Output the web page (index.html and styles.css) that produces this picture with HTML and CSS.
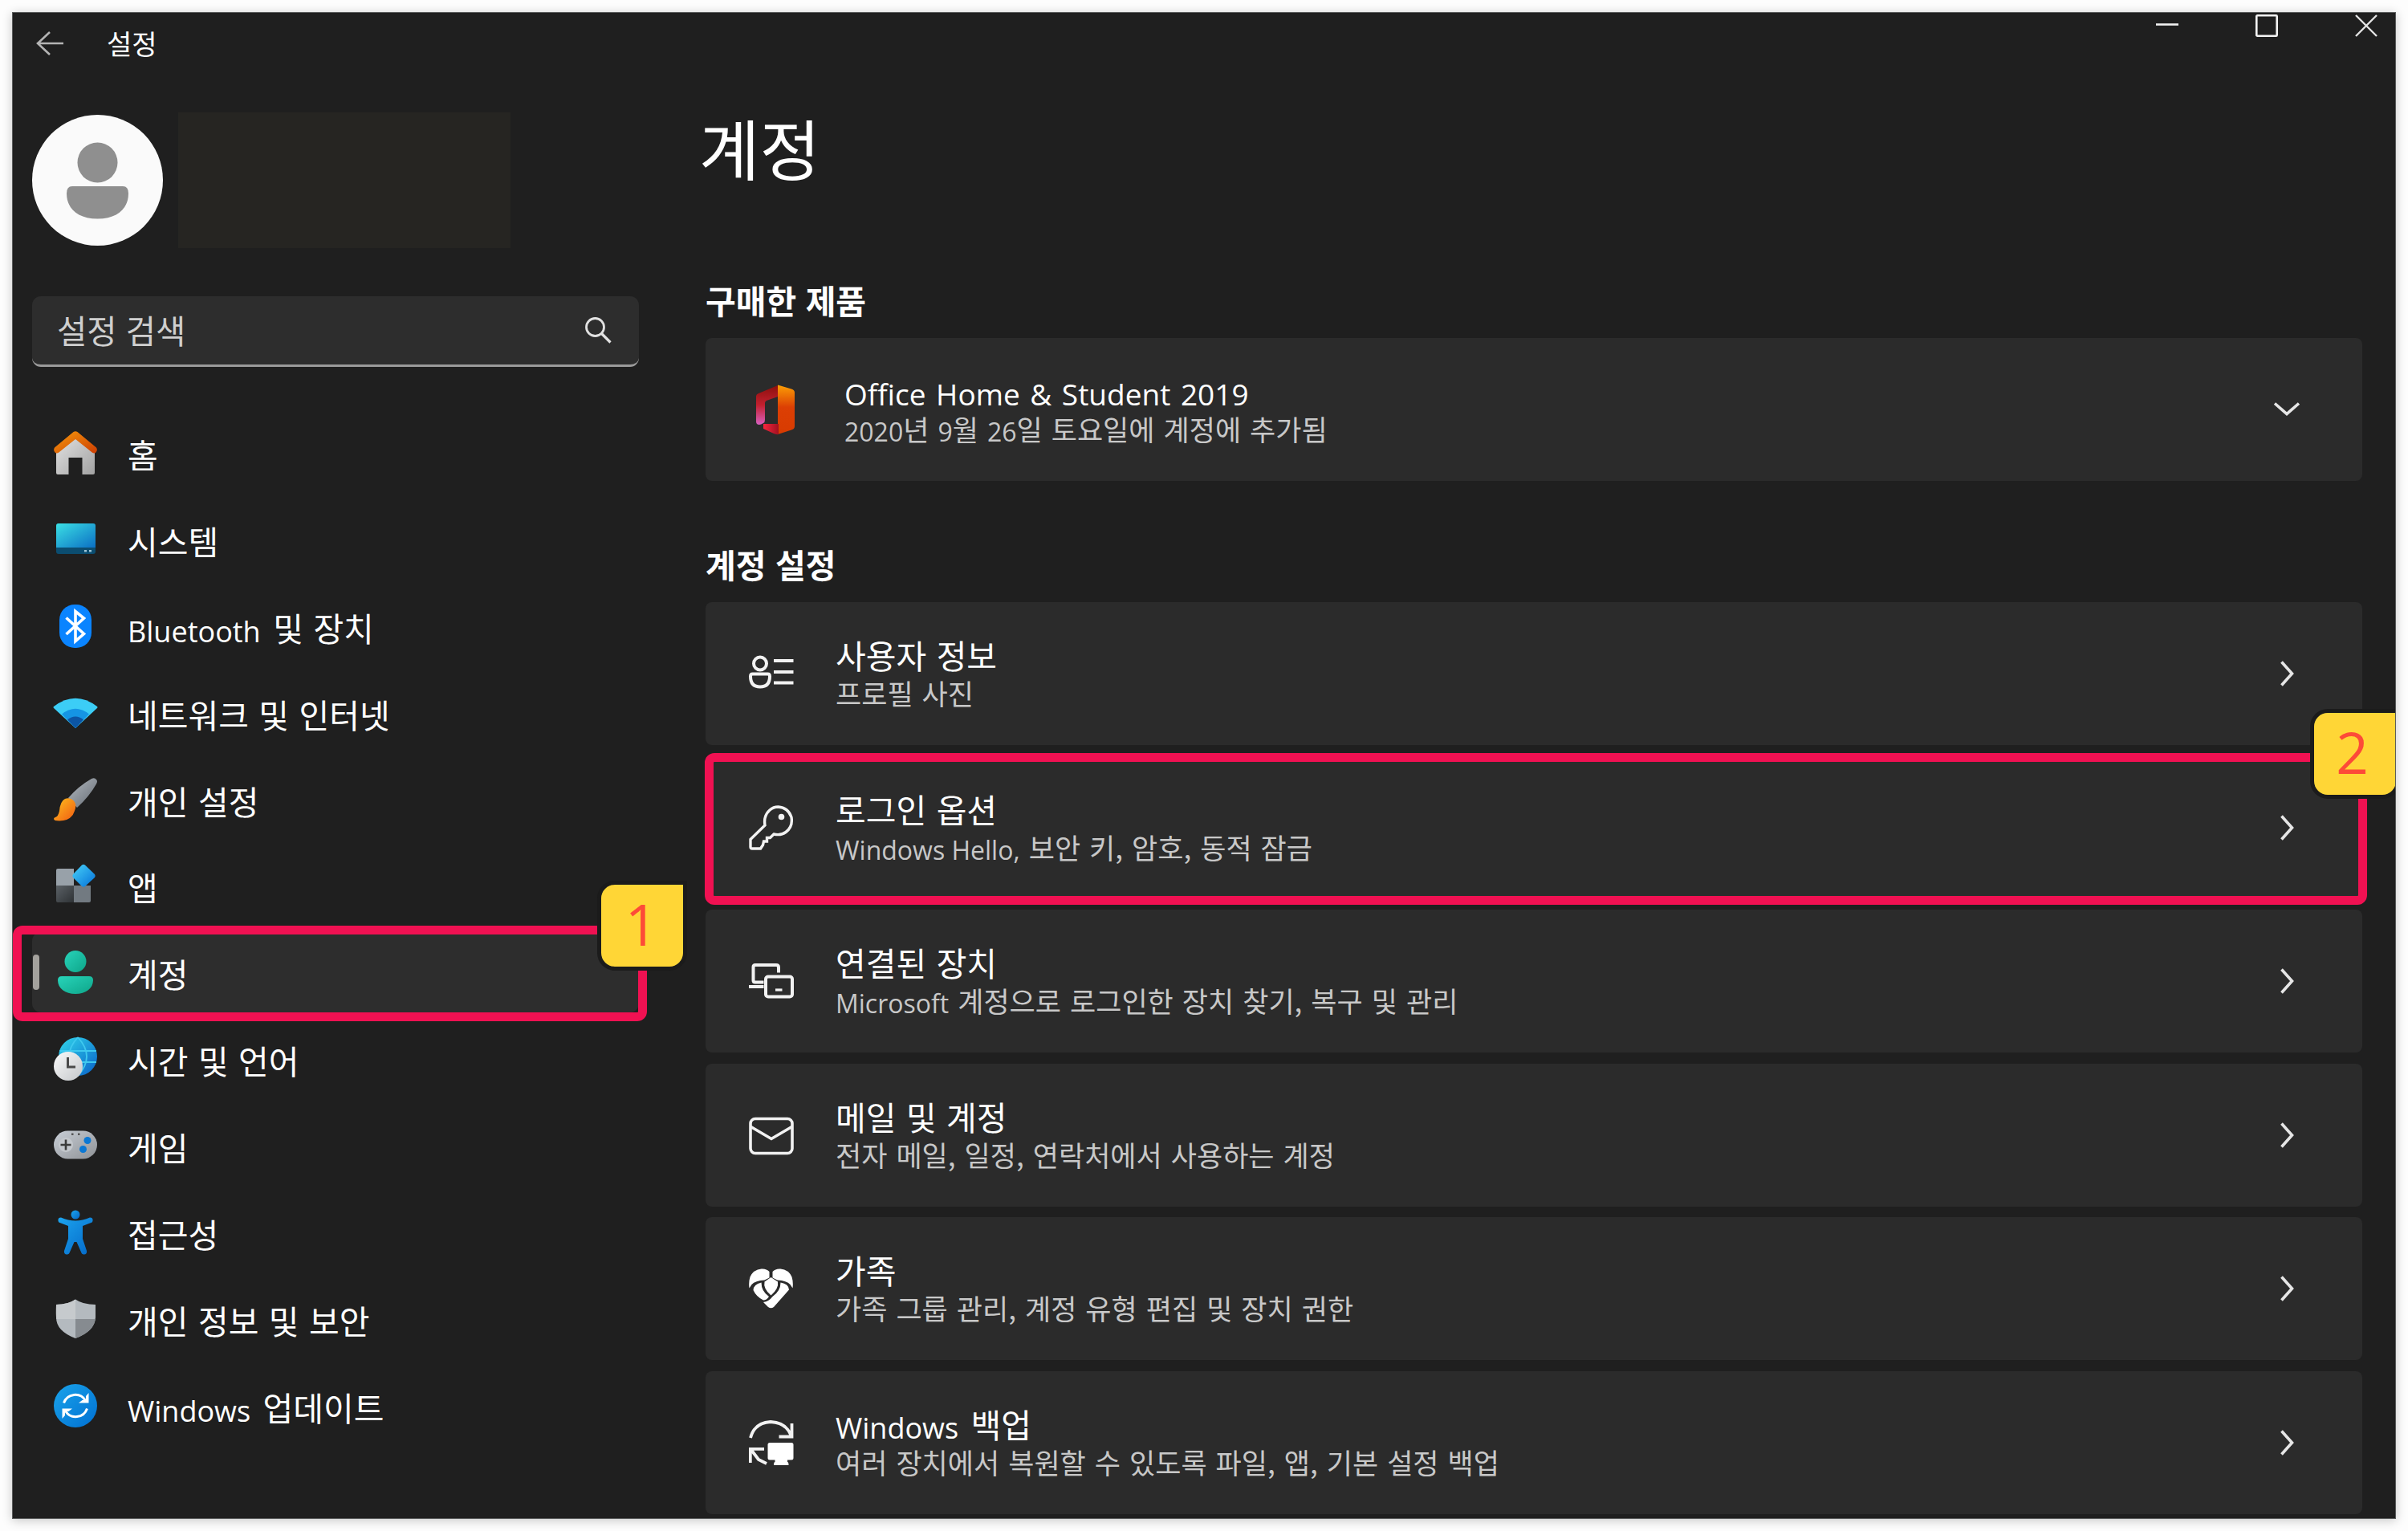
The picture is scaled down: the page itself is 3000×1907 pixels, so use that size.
FILE: index.html
```html
<!DOCTYPE html>
<html lang="ko">
<head>
<meta charset="utf-8">
<title>설정</title>
<link rel="stylesheet" href="styles.css">
</head>
<body>
<div class="window">
  <header class="titlebar">
    <svg class="back" viewBox="0 0 34 32"><path d="M17 2 2 16l15 14M2 16h32" fill="none" stroke="#b4b4b4" stroke-width="2.6"/></svg>
    <span class="app-name">설정</span>
    <div class="controls">
      <svg viewBox="0 0 28 28"><path d="M0 12.5h28" stroke="#f2f2f2" stroke-width="2.6"/></svg>
      <svg viewBox="0 0 28 28"><rect x="1.3" y="1.3" width="25.4" height="25.4" rx="1" fill="none" stroke="#f2f2f2" stroke-width="2.6"/></svg>
      <svg viewBox="0 0 28 28"><path d="m1 1 26 26M27 1 1 27" stroke="#e4e4e4" stroke-width="2.4"/></svg>
    </div>
  </header>

  <div class="body">
    <aside class="sidebar">
      <div class="profile">
        <svg class="avatar" viewBox="0 0 163 163"><circle cx="81.5" cy="81.5" r="81.5" fill="#fafafa"/><circle cx="81.5" cy="59.5" r="25" fill="#8f8f8f"/><path d="M50 89h63q7 0 7 9c0 18-13 31.500-38.500 31.500S43 116 43 98q0-9 7-9z" fill="#8f8f8f"/></svg>
        <div class="name"></div>
      </div>
      <div class="search">
        <span>설정 검색</span>
        <svg viewBox="0 0 34 34"><circle cx="13.500" cy="13.500" r="11" fill="none" stroke="#e2e2e2" stroke-width="2.800"/><path d="m21.500 21.500 11 11" stroke="#e2e2e2" stroke-width="3.200"/></svg>
      </div>
      <nav class="nav">
        <a class="item">
          <svg viewBox="0 0 56 56"><defs><linearGradient id="roof" x2="1" y2="1"><stop stop-color="#f69a0c"/><stop offset="1" stop-color="#cd3d02"/></linearGradient><linearGradient id="wall" x2="1" y2="1"><stop stop-color="#e4e4e4"/><stop offset="1" stop-color="#a2a2a2"/></linearGradient></defs><path d="M4 22 28 5l24 17v31q0 2-2 2H36.500V34h-17v21H6q-2 0-2-2z" fill="url(#wall)"/><path d="M25.500 2q2.500-1.600 5 0L54 21.500q2 3-.5 6-2 2-4.500.3L28 11 7 27.800q-2.500 1.700-4.500-.3-2.500-3-.5-6z" fill="url(#roof)"/></svg>
          <span>홈</span></a>
        <a class="item">
          <svg viewBox="0 0 56 56"><defs><linearGradient id="screen" x2="1" y2="1"><stop stop-color="#3be0e4"/><stop offset="1" stop-color="#0b6fc4"/></linearGradient></defs><rect x="4" y="8" width="49" height="38" rx="3" fill="#0b4d70"/><path d="M7 8h43q3 0 3 3v27H4V11q0-3 3-3z" fill="url(#screen)"/><path d="M39 41h3v2.500h-3zM45 41h3v2.500h-3z" fill="#9cc4d6"/></svg>
          <span>시스템</span></a>
        <a class="item">
          <svg viewBox="0 0 56 56"><rect x="8" y="1" width="40" height="54" rx="19" fill="#0a84ff"/><path d="m16.500 17.500 22 20L28 46.500V9.500l10.500 8.500-22 20" fill="none" stroke="#fff" stroke-width="3.600"/></svg>
          <span><b class="latin">Bluetooth</b> 및 장치</span></a>
        <a class="item">
          <svg viewBox="0 0 56 56"><path d="M1 20Q28-.5 55 20q1 1 0 2L28 47 1 22q-1-1 0-2z" fill="#3ccdf6"/><path d="M11 29.500q17-13.500 34 0L28 47z" fill="#1595e4"/><path d="M18 36.500q10-8 20 0L28 47z" fill="#0c55a4"/></svg>
          <span>네트워크 및 인터넷</span></a>
        <a class="item">
          <svg viewBox="0 0 56 56"><defs><linearGradient id="handle" x2="1" y2="1"><stop stop-color="#b4bac1"/><stop offset="1" stop-color="#646b73"/></linearGradient><linearGradient id="bristle" x2="1" y2="1"><stop stop-color="#ffc21e"/><stop offset="1" stop-color="#f05a12"/></linearGradient></defs><path d="M19 26Q32 11 48 2q4-2 6 1 2 2 0 5.500-9 16-24 29.500z" fill="url(#handle)"/><path d="M15 27q6-2.500 11 2.500 4 5 1 12.500Q23 54.500 8 54.500q-7 0-7-2.500 0-1.500 2-2 3.500-1 5-8 1-12 7-15z" fill="url(#bristle)"/></svg>
          <span>개인 설정</span></a>
        <a class="item">
          <svg viewBox="0 0 56 56"><defs><linearGradient id="tile" x2="1" y2="1"><stop stop-color="#5b6166"/><stop offset="1" stop-color="#2e3235"/></linearGradient><linearGradient id="gem" x2="1" y2="1"><stop stop-color="#48d2f8"/><stop offset="1" stop-color="#0470d8"/></linearGradient></defs><path d="M4 9q0-2 2-2h20v21H4z" fill="#98a1a9"/><path d="M4 28h22v21H6q-2 0-2-2z" fill="url(#tile)"/><path d="M26 28h21v19q0 2-2 2H26z" fill="#727a81"/><path d="M36 2.500q2-1.500 4 0l12 11.500q1.500 2 0 4L40 29q-2 1.500-4 0L25 18q-1.500-2 0-4z" fill="url(#gem)"/></svg>
          <span>앱</span></a>
        <a class="item selected">
          <svg viewBox="0 0 56 56"><defs><linearGradient id="teal" x2="1" y2="1"><stop stop-color="#28d4ba"/><stop offset="1" stop-color="#0ea589"/></linearGradient></defs><circle cx="28" cy="14.500" r="13.500" fill="url(#teal)"/><path d="M11 33h34q5 0 5 5c0 10-9 17-22 17S6 48 6 38q0-5 5-5z" fill="url(#teal)"/></svg>
          <span>계정</span></a>
        <a class="item">
          <svg viewBox="0 0 56 56"><defs><linearGradient id="globe" x2="1" y2="1"><stop stop-color="#32d8ec"/><stop offset="1" stop-color="#0860c8"/></linearGradient><linearGradient id="clock" x2="1" y2="1"><stop stop-color="#fbfbfb"/><stop offset="1" stop-color="#c4c7ca"/></linearGradient></defs><circle cx="31" cy="25" r="24" fill="url(#globe)"/><path d="M8 18h46M8 32h46M31 1q-22 24 0 48M31 1q22 24 0 48" fill="none" stroke="#3fc9ef" stroke-width="1.800"/><circle cx="19" cy="37" r="18" fill="url(#clock)"/><path d="M18.500 26v12H28" fill="none" stroke="#4a4a4a" stroke-width="3"/></svg>
          <span>시간 및 언어</span></a>
        <a class="item">
          <svg viewBox="0 0 56 56"><defs><linearGradient id="pad" x2="1" y2="1"><stop stop-color="#c8ced6"/><stop offset="1" stop-color="#8f9296"/></linearGradient></defs><rect x="1" y="9.500" width="54" height="35" rx="17.500" fill="url(#pad)"/><circle cx="16" cy="27" r="9" fill="#c4c8cd"/><path d="M9.500 27h13M16 20.500v13" stroke="#3c3c3c" stroke-width="2.600"/><circle cx="43" cy="21.500" r="4.500" fill="#0b78d4"/><circle cx="37.500" cy="32.500" r="4.500" fill="#0b78d4"/><path d="M23 12.500h2.500v2.500H23zM31 12.500h2.500v2.500H31z" fill="#555"/></svg>
          <span>게임</span></a>
        <a class="item">
          <svg viewBox="0 0 56 56"><defs><linearGradient id="man" x2="1" y2="1"><stop stop-color="#1ca4ee"/><stop offset="1" stop-color="#0468c8"/></linearGradient></defs><circle cx="28" cy="6" r="5.500" fill="url(#man)"/><path d="M10 9.500Q28 17.500 46 9.500q4 0 3.500 4 0 2-2 2.500L37 20v16l5 15q.5 4-3 4.500-3 .5-4-3L29.500 40h-3L21 52.500q-1 3.500-4 3-3.500-.5-3-4.500l5-15V20L8.500 16q-2-.5-2-2.500-.5-4 3.500-4z" fill="url(#man)"/></svg>
          <span>접근성</span></a>
        <a class="item">
          <svg viewBox="0 0 56 56"><path d="M28 3.500Q37 10 53 10v16Q52 43 28 52 4 43 4 26V10q15 0 24-6.500z" fill="#b4babf"/><path d="M28 3.500V28H4.200Q3.500 22 4 10q15 0 24-6.500z" fill="#c6cacd"/><path d="M28 28h24.800Q51 43.500 28 52z" fill="#868b90"/></svg>
          <span>개인 정보 및 보안</span></a>
        <a class="item">
          <svg viewBox="0 0 56 56"><defs><linearGradient id="upd" x2="1" y2="1"><stop stop-color="#1aa3ea"/><stop offset="1" stop-color="#0070d2"/></linearGradient></defs><circle cx="28" cy="28" r="27" fill="url(#upd)"/><path d="M13.500 24.500a15 15 0 0 1 27-3M42.500 31.500a15 15 0 0 1-27 3" fill="none" stroke="#fff" stroke-width="3"/><path d="M44.500 12v12.500H32l4.500-3.500h4.500v-5zM11.500 44V31.500H24L19.500 35H15v5z" fill="#fff"/></svg>
          <span><b class="latin">Windows</b> 업데이트</span></a>
      </nav>
    </aside>

    <main class="main">
      <h1>계정</h1>
      <h2>구매한 제품</h2>
      <div class="card product">
        <svg class="icon" viewBox="0 0 56 66"><defs><linearGradient id="of1" x2="0" y2="1"><stop stop-color="#8c0f0c"/><stop offset=".5" stop-color="#c2202f"/><stop offset="1" stop-color="#d960c0"/></linearGradient><linearGradient id="of2" x2="0" y2="1"><stop stop-color="#fb9f05"/><stop offset=".45" stop-color="#dc3f04"/><stop offset="1" stop-color="#d83b01"/></linearGradient><linearGradient id="of3" x2="1" y2="0"><stop stop-color="#f7263e"/><stop offset="1" stop-color="#a01020"/></linearGradient></defs><path d="M33 3v14L19 22q-2 1-2 3v21q0 3-2 4-3 2-5 2-4 0-4-4V17q0-3 3-4z" fill="url(#of1)"/><path d="M33 2.500 50 7.500q4 1 4 4.500v42q0 3.500-4 4.500L33 64z" fill="url(#of2)"/><path d="M15 51h19v13q-3 .5-6-1L15 57z" fill="url(#of3)"/></svg>
        <div class="text"><div class="title"><b class="latin">Office Home &amp; Student 2019</b></div>
        <div class="sub"><b class="latin">2020</b>년 <b class="latin">9</b>월 <b class="latin">26</b>일 토요일에 계정에 추가됨</div></div>
        <svg class="chev" viewBox="0 0 34 34"><path d="m2 9.500 15 13 15-13" fill="none" stroke="#e6e6e6" stroke-width="3.600"/></svg>
      </div>

      <h2 class="second">계정 설정</h2>
      <div class="list">
        <div class="card">
          <svg class="icon" viewBox="0 0 56 56" fill="none" stroke="#f2f2f2" stroke-width="4"><circle cx="14" cy="15.500" r="8"/><path d="M4.500 28.500h19q2.500 0 2.500 3 0 13-12 13T2 31.500q0-3 2.500-3zM31 12h24.500M31 26h24.500M31 39.500h24.500"/></svg>
          <div class="text"><div class="title">사용자 정보</div><div class="sub">프로필 사진</div></div>
          <svg class="chev" viewBox="0 0 34 34"><path d="m10.500 2.500 13 14.500-13 14.500" fill="none" stroke="#e6e6e6" stroke-width="3.600"/></svg>
        </div>
        <div class="card">
          <svg class="icon" viewBox="0 0 56 56" fill="none" stroke="#f2f2f2" stroke-width="3.400"><path d="M36.500 2Q49 3 53 15q2 12-7 18.500-6 4.500-15 2.500l-4.500 4.500h-4V45h-4l-1 4.500-3 4.500H4q-2 0-2-2V42.500L20 25q-2-12 6-19 4.500-4 10.500-4z"/><circle cx="40.500" cy="14.500" r="3.800" fill="#f2f2f2" stroke="none"/></svg>
          <div class="text"><div class="title">로그인 옵션</div><div class="sub"><b class="latin">Windows Hello,</b> 보안 키, 암호, 동적 잠금</div></div>
          <svg class="chev" viewBox="0 0 34 34"><path d="m10.500 2.500 13 14.500-13 14.500" fill="none" stroke="#e6e6e6" stroke-width="3.600"/></svg>
        </div>
        <div class="card">
          <svg class="icon" viewBox="0 0 56 56" fill="none" stroke="#f2f2f2" stroke-width="4"><path d="M18.500 29.500H8q-2.500 0-2.500-2.500V10.500Q5.500 8 8 8h26q3 0 3 3v6.500M0 35h18.500"/><rect x="21" y="22.500" width="33" height="25" rx="3"/><path d="M33 39h8.500" stroke-width="3.200"/></svg>
          <div class="text"><div class="title">연결된 장치</div><div class="sub"><b class="latin">Microsoft</b> 계정으로 로그인한 장치 찾기, 복구 및 관리</div></div>
          <svg class="chev" viewBox="0 0 34 34"><path d="m10.500 2.500 13 14.500-13 14.500" fill="none" stroke="#e6e6e6" stroke-width="3.600"/></svg>
        </div>
        <div class="card">
          <svg class="icon" viewBox="0 0 56 56" fill="none" stroke="#f2f2f2" stroke-width="3.600"><rect x="2" y="7.500" width="52" height="43" rx="6"/><path d="m2.500 17.500 25.500 15 25.500-15"/></svg>
          <div class="text"><div class="title">메일 및 계정</div><div class="sub">전자 메일, 일정, 연락처에서 사용하는 계정</div></div>
          <svg class="chev" viewBox="0 0 34 34"><path d="m10.500 2.500 13 14.500-13 14.500" fill="none" stroke="#e6e6e6" stroke-width="3.600"/></svg>
        </div>
        <div class="card">
          <svg class="icon" viewBox="0 0 56 56"><path d="M15.500 3.500Q22 3 25.500 7v7.500l-6 3Q8 18 3.500 23L.5 27.500Q-.5 20 1.500 13.500 5.500 4.500 15.500 3.500zM39.500 3.500Q33 3 29.500 7v7.500l6 3Q47 18 51.500 23l3 4.500q1-7.500-1-14-4-9-14-10z" fill="#fff"/><path d="M19.500 19.500 27.500 14l8.500 5.500q1.500 8.500-8.500 17-10-8.500-8-17z" fill="#fff"/><path d="M15.500 20.500q0 11 9.500 17.500-3 4.500-7 4.500Q9 38 5.500 30q0-7 10-9.500zM39.500 20.500q10 1.500 10.500 9L31 51q-3.500 2.500-7 0l-6-6q7-1 11.500-7 10-7 10-17.500z" fill="#fff"/></svg>
          <div class="text"><div class="title">가족</div><div class="sub">가족 그룹 관리, 계정 유형 편집 및 장치 권한</div></div>
          <svg class="chev" viewBox="0 0 34 34"><path d="m10.500 2.500 13 14.500-13 14.500" fill="none" stroke="#e6e6e6" stroke-width="3.600"/></svg>
        </div>
        <div class="card">
          <svg class="icon" viewBox="0 0 56 56"><path d="M2 22Q7 3 27 2q20 1 25.500 17.500M37.500 20.500H53.500V4M1.800 53V35.800H19M3 37l9 12 10 5" fill="none" stroke="#f2f2f2" stroke-width="3.800"/><path d="M26 28h27q2.500 0 2.500 2.500V47q0 2.500-2.500 2.500h-5V52q1.500 0 1.500 4H31q0-4 1.500-4v-2.500H26q-2.500 0-2.500-2.500V30.500Q23.500 28 26 28z" fill="#fff"/></svg>
          <div class="text"><div class="title"><b class="latin">Windows</b> 백업</div><div class="sub">여러 장치에서 복원할 수 있도록 파일, 앱, 기본 설정 백업</div></div>
          <svg class="chev" viewBox="0 0 34 34"><path d="m10.500 2.500 13 14.500-13 14.500" fill="none" stroke="#e6e6e6" stroke-width="3.600"/></svg>
        </div>
      </div>
    </main>
  </div>

  <div class="mark mark-1"></div>
  <div class="mark mark-2"></div>
  <div class="badge badge-1">1</div>
  <div class="badge badge-2">2</div>
</div>
</body>
</html>
```
FILE: styles.css
```css
* { box-sizing: border-box; }

body {
  margin: 0;
  padding: 15px;
  width: 3000px;
  height: 1907px;
  overflow: hidden;
  background: #fdfdfd;
  font-family: "Noto Sans CJK KR", "Noto Sans", sans-serif;
  color: #fff;
}

svg { display: block; flex: none; }

.window {
  position: relative;
  width: 2970px;
  height: 1877px;
  overflow: hidden;
  background: #1f1f1f;
  border: 1px solid #5a5c5c;
  box-shadow: 0 2px 12px rgba(0, 0, 0, .22);
}

.latin {
  margin-right: 3px;
  font-family: "Open Sans", "Noto Sans", sans-serif;
  font-weight: 400;
  font-size: 36px;
  line-height: 1;
  vertical-align: -1px;
  word-spacing: 0;
}

/* Title bar */
.titlebar { display: flex; height: 78px; padding: 0 22px 0 29px; }
.back { width: 34px; height: 32px; margin-top: 22px; }
.app-name { margin-left: 54px; font-size: 34px; line-height: 50px; margin-top: 13px; }
.controls { display: flex; gap: 96px; margin-left: auto; padding-top: 2px; }
.controls svg { width: 28px; height: 28px; }

.body { display: flex; gap: 83px; padding-left: 24px; }

/* Sidebar */
.sidebar { width: 756px; padding-top: 46px; }
.profile { display: flex; align-items: center; gap: 19px; height: 169px; }
.avatar { width: 163px; height: 163px; }
.name { width: 414px; height: 169px; background: #262522; }

.search {
  display: flex;
  align-items: center;
  justify-content: space-between;
  height: 88px;
  margin-top: 60px;
  padding: 0 34px 1px 31px;
  border-radius: 11px;
  border-bottom: 3px solid #9a9a9a;
  background: #2d2d2d;
  color: #cfcfcf;
  font-size: 40.500px;
  line-height: 60px;
}
.search svg { width: 34px; height: 34px; }

.nav { display: flex; flex-direction: column; gap: 7.9px; margin-top: 57px; }
.item {
  position: relative;
  display: flex;
  align-items: center;
  gap: 37px;
  height: 100px;
  padding-left: 26px;
  border-radius: 11px;
  font-size: 41px;
  line-height: 60px;
  word-spacing: 1px;
}
.item svg { width: 56px; height: 56px; }
.item span { padding-top: 2px; white-space: nowrap; }
.selected { background: #2d2d2d; }
.selected::before {
  content: "";
  position: absolute;
  left: 1px;
  top: 28px;
  width: 8px;
  height: 44px;
  border-radius: 4px;
  background: #a3a19c;
}

/* Main column */
.main { width: 2064px; padding-top: 39px; }
h1 { margin: 0 0 110px -8px; font-size: 82px; font-weight: 400; line-height: 100px; }
h2 { margin: 0 0 18px; font-size: 41px; font-weight: 700; line-height: 60px; }
.second { margin-top: 73px; }
.list { display: flex; flex-direction: column; gap: 13.5px; }

.card {
  display: flex;
  align-items: center;
  height: 178px;
  padding: 0 77px 0 54px;
  border-radius: 8px;
  background: #2b2b2b;
}
.icon { width: 56px; height: 56px; }
.text { flex: 1; margin-left: 52px; white-space: nowrap; }
.title { font-size: 41px; line-height: 48px; word-spacing: 1px; }
.sub { font-size: 35px; line-height: 48px; color: #c8c8c8; word-spacing: 1.2px; }
.sub .latin { margin-right: 0; font-size: 32px; }
.chev { width: 34px; height: 34px; }
.product .icon { width: 56px; height: 66px; margin-left: 3px; }
.product .text { margin-left: 60px; }
.product .title .latin { font-size: 37px; word-spacing: 3px; }

/* Highlight frames and step numbers */
.mark { position: absolute; border: 11px solid #f01152; border-radius: 12px; }
.mark-1 { left: 0; top: 1137px; width: 790px; height: 119px; }
.mark-2 { left: 862px; top: 922px; width: 2071px; height: 189px; }
.badge {
  position: absolute;
  width: 102px;
  height: 102px;
  border-radius: 17px 0 17px 17px;
  background: #ffd636;
  box-shadow: 0 0 0 5px #1b1b1b;
  color: #fd4b38;
  font-family: "Open Sans", "Noto Sans", sans-serif;
  font-size: 71px;
  font-weight: 500;
  line-height: 98px;
  text-align: center;
}
.badge-1 { left: 733px; top: 1086px; padding-right: 2px; }
.badge-2 { left: 2867px; top: 872px; padding-right: 7px; }
```
